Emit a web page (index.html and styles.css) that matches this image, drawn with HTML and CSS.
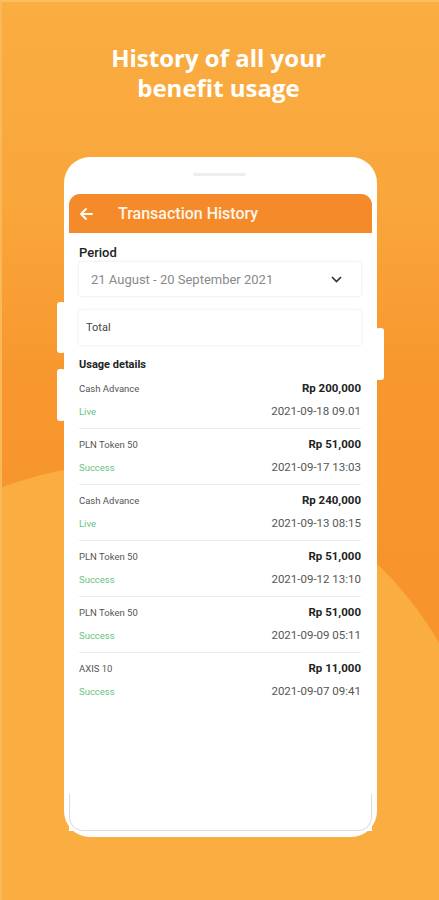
FILE: index.html
```html
<!DOCTYPE html>
<html>
<head>
<meta charset="utf-8">
<link rel="stylesheet" href="styles.css">
</head>
<body>
<div class="page">
  <div class="blob"></div>
  <h1 class="headline">History of all your<br>benefit usage</h1>
  <div class="phone">
    <span class="side-btn left one"></span>
    <span class="side-btn left two"></span>
    <span class="side-btn right"></span>
    <div class="speaker"></div>
    <div class="screen">
      <div class="appbar">
        <svg class="back" width="14" height="14" viewBox="0 0 14 14"><path d="M13 7H2M7 2L2 7l5 5" fill="none" stroke="#fff" stroke-width="1.8" stroke-linecap="round" stroke-linejoin="round"/></svg>
        <span class="title">Transaction History</span>
      </div>
      <div class="content">
        <div class="label">Period</div>
        <div class="select">
          <span>21 August - 20 September 2021</span>
          <svg width="11" height="7" viewBox="0 0 11 7"><path d="M1 1l4.5 4.5L10 1" fill="none" stroke="#333" stroke-width="1.7"/></svg>
        </div>
        <div class="total">Total</div>
        <div class="section">Usage details</div>
        <div class="list">
          <div class="row"><span class="name">Cash Advance</span><span class="amt">Rp 200,000</span><span class="status">Live</span><span class="date">2021-09-18 09.01</span></div>
          <div class="row"><span class="name">PLN Token 50</span><span class="amt">Rp 51,000</span><span class="status">Success</span><span class="date">2021-09-17 13:03</span></div>
          <div class="row"><span class="name">Cash Advance</span><span class="amt">Rp 240,000</span><span class="status">Live</span><span class="date">2021-09-13 08:15</span></div>
          <div class="row"><span class="name">PLN Token 50</span><span class="amt">Rp 51,000</span><span class="status">Success</span><span class="date">2021-09-12 13:10</span></div>
          <div class="row"><span class="name">PLN Token 50</span><span class="amt">Rp 51,000</span><span class="status">Success</span><span class="date">2021-09-09 05:11</span></div>
          <div class="row last"><span class="name">AXIS 10</span><span class="amt">Rp 11,000</span><span class="status">Success</span><span class="date">2021-09-07 09:41</span></div>
        </div>
      </div>
    </div>
  </div>
</div>
</body>
</html>
```

FILE: styles.css
```css
* { box-sizing: border-box; }
html, body { margin: 0; padding: 0; }
body { width: 439px; height: 900px; overflow: hidden; font-family: Roboto, "Liberation Sans", sans-serif; }

.page {
  position: relative;
  width: 439px;
  height: 900px;
  overflow: hidden;
  background: linear-gradient(180deg, #faad41 0px, #f9a63b 200px, #f7972e 380px, #f7952c 560px);
  border-top: 2px solid #fbbf63;
  border-left: 2px solid #fbb858;
  padding-top: 41px;
}
.blob {
  position: absolute;
  left: -231px;
  top: 462px;
  width: 716px;
  height: 716px;
  border-radius: 50%;
  background: #faae42;
}

.headline {
  position: relative;
  margin: 0;
  text-align: center;
  color: #fff;
  font-family: "Open Sans", Lato, sans-serif;
  font-weight: 700;
  font-size: 24px;
  line-height: 30px;
  letter-spacing: 0;
  padding-right: 4px;
}

.phone {
  position: relative;
  margin: 54px 0 0 62px;
  width: 313px;
  height: 680px;
  background: #fff;
  border-radius: 26px;
  padding: 37px 5px 6px;
}
.side-btn {
  position: absolute;
  width: 8px;
  background: #fff;
  border-radius: 3px;
}
.side-btn.left { left: -7px; }
.side-btn.one { top: 145px; height: 51px; }
.side-btn.two { top: 212px; height: 52px; }
.side-btn.right { right: -7px; top: 171px; height: 52px; }
.speaker {
  position: absolute;
  top: 16px;
  left: 129px;
  width: 53px;
  height: 3px;
  border-radius: 2px;
  background: #eeeeee;
}

.screen {
  position: relative;
  height: 637px;
  background: #fff;
}
.screen::after {
  content: "";
  position: absolute;
  left: 0;
  right: 0;
  bottom: 0;
  height: 36px;
  border: 1.5px solid #dcdcdc;
  border-top: none;
  border-radius: 0 0 14px 14px;
}

.appbar {
  height: 39px;
  background: #f58a2a;
  border-radius: 11px 11px 0 0;
  display: flex;
  align-items: center;
  padding-left: 10px;
}
.back { display: block; }
.title {
  margin-left: 25px;
  color: #fff4e8;
  font-size: 16px;
  font-weight: 500;
}

.content { padding: 12px 11px 0 10px; }
.label {
  font-size: 13px;
  font-weight: 500;
  color: #222;
  line-height: 16px;
}
.select {
  margin-top: 1px;
  height: 34px;
  display: flex;
  align-items: center;
  justify-content: space-between;
  padding: 0 19px 0 12px;
  border-radius: 3px;
  box-shadow: 0 0 3px rgba(0,0,0,0.12);
  font-size: 13px;
  color: #8a8a8a;
}
.total {
  margin-top: 14px;
  height: 35px;
  display: flex;
  align-items: center;
  padding-left: 7px;
  font-size: 11px;
  color: #444;
  border-radius: 3px;
  box-shadow: 0 0 3px rgba(0,0,0,0.11);
}
.section {
  margin-top: 13px;
  font-size: 11px;
  font-weight: 700;
  color: #222;
  line-height: 14px;
}
.list { margin-top: 1px; }
.row {
  display: grid;
  grid-template-columns: 1fr auto;
  grid-template-rows: 14px 14px;
  row-gap: 9px;
  align-items: center;
  padding: 8px 0 10px;
  border-bottom: 1px solid #ededed;
}
.row.last { border-bottom: none; }
.name { font-size: 9.5px; color: #555; }
.amt { font-size: 11.5px; font-weight: 700; color: #222; text-align: right; }
.status { font-size: 9.5px; color: #6cc27e; }
.date { font-size: 11.5px; color: #555; text-align: right; }
```
